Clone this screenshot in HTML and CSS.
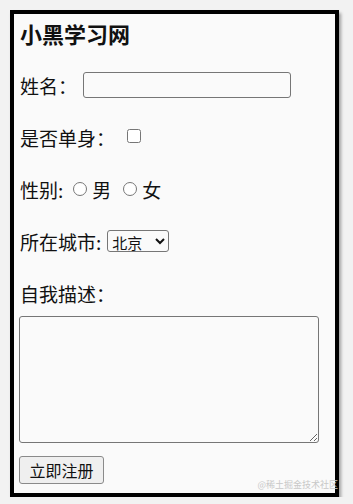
FILE: index.html
```html
<!DOCTYPE html>
<html lang="zh-CN">
<head>
    <meta charset="UTF-8">
    <meta name="viewport" content="width=device-width, initial-scale=1.0">
    <title>小黑学习网</title>
    <link rel="stylesheet" href="styles.css">
</head>
<body>
    <!-- 注册表单 -->
    <div class="frame">
        <h3 class="title">小黑学习网</h3>
        <form class="reg-form">
            <div class="row">
                <span>姓名：</span>
                <input type="text" class="name-input">
            </div>
            <div class="row">
                <span>是否单身：</span>
                <input type="checkbox" class="check">
            </div>
            <div class="row">
                <span>性别:</span>
                <label class="opt"><input type="radio" name="gender" class="radio">男</label>
                <label class="opt"><input type="radio" name="gender" class="radio">女</label>
            </div>
            <div class="row">
                <span>所在城市:</span>
                <select class="city">
                    <option>北京</option>
                    <option>上海</option>
                    <option>广州</option>
                </select>
            </div>
            <div class="row">
                <span>自我描述：</span>
            </div>
            <textarea class="desc"></textarea>
            <button type="button" class="submit">立即注册</button>
        </form>
        <div class="watermark">@稀土掘金技术社区</div>
    </div>
</body>
</html>
```

FILE: styles.css
```css
body {
    margin: 0;
    padding: 0;
    background: #f2f2f2;
    font-family: "Noto Sans CJK SC", "Noto Sans", sans-serif;
    color: #111;
}

/* 外框 */
.frame {
    position: relative;
    box-sizing: border-box;
    width: 329px;
    height: 487px;
    margin: 10px 0 0 10px;
    padding: 5px 5px 0 5px;
    border: 4px solid #000;
    background: #fafafa;
    box-shadow: 2px 3px 3px rgba(0, 0, 0, 0.35);
}

.title {
    margin: 0;
    height: 28px;
    line-height: 28px;
    font-size: 22px;
    font-weight: bold;
    padding-left: 1px;
}

.reg-form {
    display: flex;
    flex-direction: column;
    align-items: flex-start;
    margin-top: 25px;
}

.row {
    display: flex;
    align-items: center;
    height: 26px;
    margin-bottom: 26px;
    font-size: 19px;
    padding-left: 1px;
    white-space: nowrap;
}

.row:nth-child(5) {
    margin-bottom: 10px;
}

.name-input {
    box-sizing: border-box;
    width: 208px;
    height: 26px;
    margin-left: 6px;
    border: 1px solid #767676;
    border-radius: 3px;
    background: #fafafa;
}

.check {
    width: 14px;
    height: 14px;
    margin: 0 0 2px 12px;
}

.opt {
    display: flex;
    align-items: center;
}

.radio {
    width: 14px;
    height: 14px;
    margin: 0 5px 0 10px;
}

.opt + .opt .radio {
    margin-left: 12px;
}

.city {
    height: 22px;
    width: 62px;
    margin-left: 6px;
    font-family: "Noto Sans CJK SC", sans-serif;
    font-size: 15px;
    border: 1px solid #767676;
    border-radius: 3px;
    background: #fafafa;
    color: #111;
}

.desc {
    box-sizing: border-box;
    width: 300px;
    height: 127px;
    margin: 0;
    border: 1px solid #767676;
    border-radius: 3px;
    background: #fafafa;
}

.submit {
    box-sizing: border-box;
    margin-top: 13px;
    width: 85px;
    height: 28px;
    padding: 0;
    font-family: "Noto Sans CJK SC", sans-serif;
    font-size: 16px;
    color: #111;
    background: #efefef;
    border: 1px solid #8a8a8a;
    border-radius: 3px;
}

/* 右下角水印 */
.watermark {
    position: absolute;
    right: -3px;
    bottom: 2px;
    font-size: 9px;
    color: #c8c8c8;
}
```
